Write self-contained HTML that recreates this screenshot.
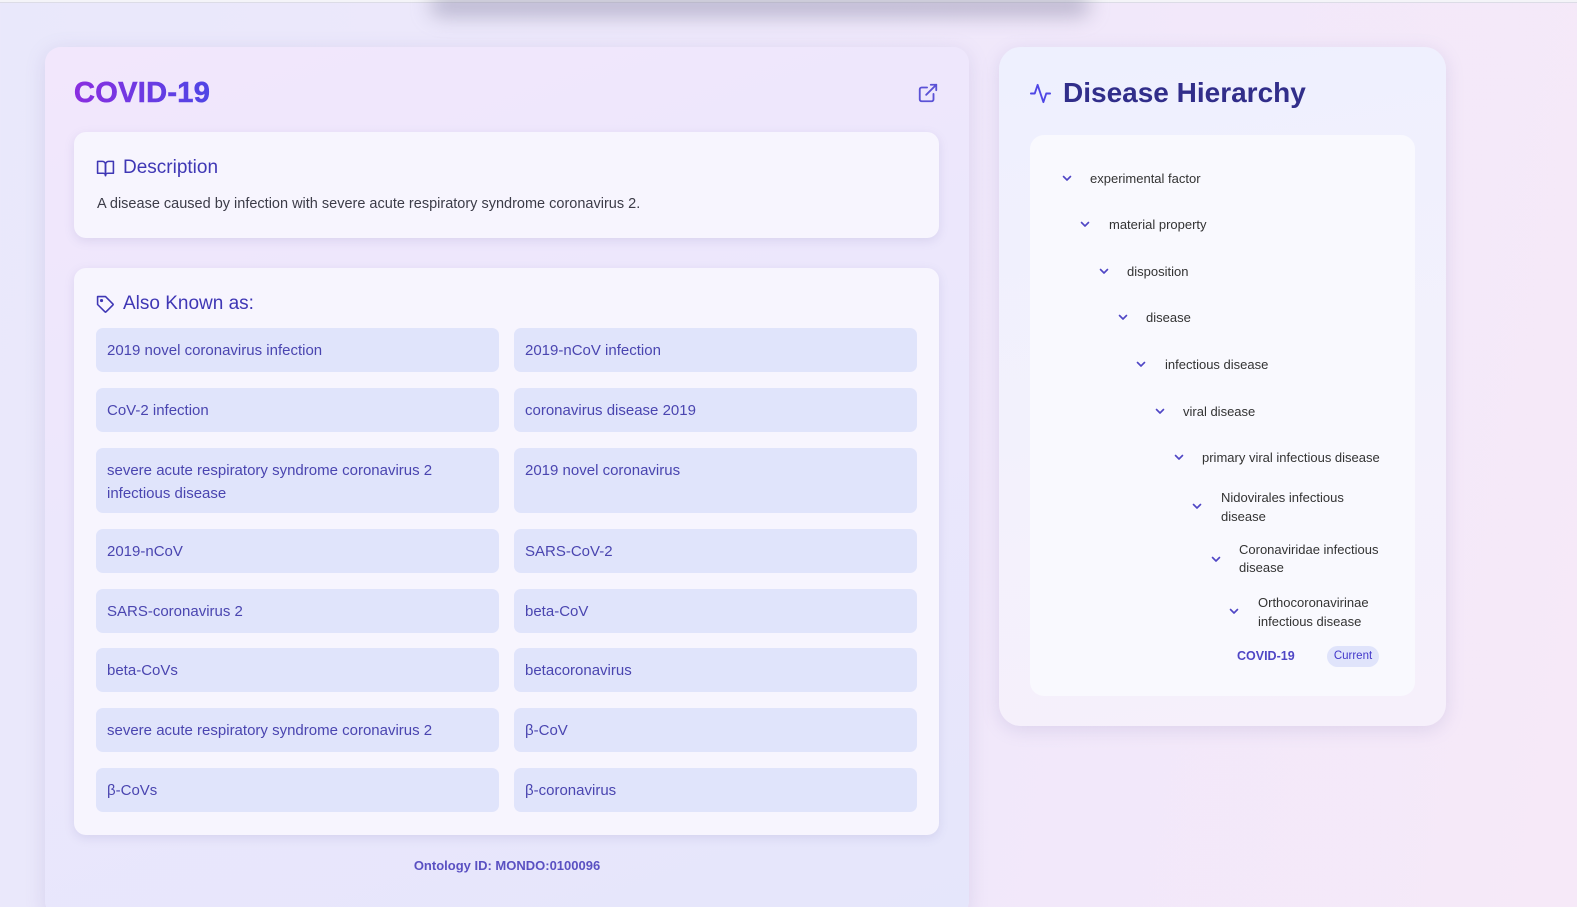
<!DOCTYPE html>
<html><head><meta charset="utf-8"><style>
*{box-sizing:border-box;margin:0;padding:0}
html,body{width:1577px;height:907px;overflow:hidden}
body{font-family:"Liberation Sans",sans-serif;background:linear-gradient(100deg,#e9e8fb 0%,#efe8fb 50%,#f6e9f8 100%);position:relative}
.topline{position:absolute;left:0;top:0;width:1577px;height:3px;background:#f4f4f8;border-bottom:1px solid #dcdce6}
.blob{position:absolute;left:430px;top:-6px;width:660px;height:22px;border-radius:20px;background:rgba(120,118,150,.45);filter:blur(10px)}
.card{position:absolute;left:45px;top:47px;width:924px;height:870px;border-radius:16px;background:linear-gradient(160deg,#f2e7fc 0%,#ebe7fc 50%,#e5e6fb 100%);box-shadow:0 4px 20px rgba(120,110,180,.18)}
.title{position:absolute;left:74px;top:77px;font-size:29px;font-weight:900;background:linear-gradient(90deg,#8a2ee0,#4f46e5);-webkit-background-clip:text;background-clip:text;color:transparent;letter-spacing:0.3px;-webkit-text-stroke:0.6px transparent}
.ext{position:absolute;left:917px;top:82px}
.sub{position:absolute;left:74px;width:865px;background:#f7f5fe;border-radius:12px;box-shadow:0 3px 10px rgba(110,100,170,.15)}
.h{position:absolute;left:22px;font-size:19px;color:#3f37b5;display:flex;align-items:center;gap:8px}
.desc{position:absolute;left:23px;top:64px;font-size:14.5px;color:#3c3c48}
.item{position:absolute;width:403px;background:#e0e4fb;border-radius:7px;color:#4a45b0;font-size:15px;line-height:23px;padding:11px 11px}
.oid{position:absolute;left:0;width:1014px;top:858px;text-align:center;font-size:13px;font-weight:bold;color:#5a50c2}
.rcard{position:absolute;left:999px;top:47px;width:447px;height:679px;border-radius:22px;background:linear-gradient(170deg,#eef0fe,#f3f1fc 60%,#f6f0fb);box-shadow:0 4px 18px rgba(120,110,180,.18)}
.rt{position:absolute;left:1063px;top:77px;font-size:28px;font-weight:bold;color:#312e8a}
.inner{position:absolute;left:1030px;top:135px;width:385px;height:561px;border-radius:14px;background:#f9f9fe}
.n{position:absolute;font-size:13px;color:#333;line-height:19px}
.c{position:absolute}
.cur{position:absolute;left:1327px;top:646px;width:52px;height:21px;border-radius:11px;background:#e0e4fb;color:#4338ca;font-size:11.5px;text-align:center;line-height:21px}
</style></head><body>
<div class="topline"></div>
<div class="blob"></div>
<div class="card"></div>
<div class="title">COVID-19</div>
<svg class="ext" width="22" height="22" viewBox="0 0 24 24" fill="none" stroke="#5b52d6" stroke-width="2" stroke-linecap="round" stroke-linejoin="round"><path d="M18 13v6a2 2 0 0 1-2 2H5a2 2 0 0 1-2-2V8a2 2 0 0 1 2-2h6"/><path d="M15 3h6v6"/><path d="M10 14 21 3"/></svg>
<div class="sub" style="top:132px;height:106px">
<div class="h" style="top:25px"><svg width="19" height="19" viewBox="0 0 24 24" fill="none" stroke="#3f37b5" stroke-width="2" stroke-linecap="round" stroke-linejoin="round"><path d="M2 3h6a4 4 0 0 1 4 4v14a3 3 0 0 0-3-3H2z"/><path d="M22 3h-6a4 4 0 0 0-4 4v14a3 3 0 0 1 3-3h7z"/></svg>Description</div>
<div class="desc">A disease caused by infection with severe acute respiratory syndrome coronavirus 2.</div>
</div>
<div class="sub" style="top:268px;height:567px">
<div class="h" style="top:25px"><svg width="19" height="19" viewBox="0 0 24 24" fill="none" stroke="#3f37b5" stroke-width="2" stroke-linecap="round" stroke-linejoin="round"><path d="M12 2H2v10l9.29 9.29a1 1 0 0 0 1.41 0l8.59-8.59a1 1 0 0 0 0-1.41z"/><circle cx="7" cy="7" r="1"/></svg>Also Known as:</div>
</div>
<div class="item" style="left:96px;top:328px;height:44px">2019 novel coronavirus infection</div>
<div class="item" style="left:514px;top:328px;height:44px">2019-nCoV infection</div>
<div class="item" style="left:96px;top:388px;height:44px">CoV-2 infection</div>
<div class="item" style="left:514px;top:388px;height:44px">coronavirus disease 2019</div>
<div class="item" style="left:96px;top:448px;height:65px">severe acute respiratory syndrome coronavirus 2 infectious disease</div>
<div class="item" style="left:514px;top:448px;height:65px">2019 novel coronavirus</div>
<div class="item" style="left:96px;top:529px;height:44px">2019-nCoV</div>
<div class="item" style="left:514px;top:529px;height:44px">SARS-CoV-2</div>
<div class="item" style="left:96px;top:589px;height:44px">SARS-coronavirus 2</div>
<div class="item" style="left:514px;top:589px;height:44px">beta-CoV</div>
<div class="item" style="left:96px;top:648px;height:44px">beta-CoVs</div>
<div class="item" style="left:514px;top:648px;height:44px">betacoronavirus</div>
<div class="item" style="left:96px;top:708px;height:44px">severe acute respiratory syndrome coronavirus 2</div>
<div class="item" style="left:514px;top:708px;height:44px">β-CoV</div>
<div class="item" style="left:96px;top:768px;height:44px">β-CoVs</div>
<div class="item" style="left:514px;top:768px;height:44px">β-coronavirus</div>
<div class="oid">Ontology ID: MONDO:0100096</div>

<div class="rcard"></div>
<svg style="position:absolute;left:1029px;top:82px" width="23" height="23" viewBox="0 0 24 24" fill="none" stroke="#4f46e5" stroke-width="2" stroke-linecap="round" stroke-linejoin="round"><path d="M22 12h-4l-3 9L9 3l-3 9H2"/></svg>
<div class="rt">Disease Hierarchy</div>
<div class="inner"></div>
<svg width="0" height="0" style="position:absolute"><defs><symbol id="ch" viewBox="0 0 12 12"><path d="M2.5 4.5 6 8l3.5-3.5" fill="none" stroke="#4f46c5" stroke-width="1.6" stroke-linecap="round" stroke-linejoin="round"/></symbol></defs></svg>
<svg class="c" style="left:1061px;top:172px" width="12" height="12"><use href="#ch"/></svg><div class="n" style="left:1090px;top:169px">experimental factor</div>
<svg class="c" style="left:1079px;top:218px" width="12" height="12"><use href="#ch"/></svg><div class="n" style="left:1109px;top:215px">material property</div>
<svg class="c" style="left:1098px;top:265px" width="12" height="12"><use href="#ch"/></svg><div class="n" style="left:1127px;top:262px">disposition</div>
<svg class="c" style="left:1117px;top:311px" width="12" height="12"><use href="#ch"/></svg><div class="n" style="left:1146px;top:308px">disease</div>
<svg class="c" style="left:1135px;top:358px" width="12" height="12"><use href="#ch"/></svg><div class="n" style="left:1165px;top:355px">infectious disease</div>
<svg class="c" style="left:1154px;top:405px" width="12" height="12"><use href="#ch"/></svg><div class="n" style="left:1183px;top:402px">viral disease</div>
<svg class="c" style="left:1173px;top:451px" width="12" height="12"><use href="#ch"/></svg><div class="n" style="left:1202px;top:448px">primary viral infectious disease</div>
<svg class="c" style="left:1191px;top:500px" width="12" height="12"><use href="#ch"/></svg><div class="n" style="left:1221px;top:488px;width:160px">Nidovirales infectious<br>disease</div>
<svg class="c" style="left:1210px;top:553px" width="12" height="12"><use href="#ch"/></svg><div class="n" style="left:1239px;top:541px;width:160px;line-height:18px">Coronaviridae infectious<br>disease</div>
<svg class="c" style="left:1228px;top:605px" width="12" height="12"><use href="#ch"/></svg><div class="n" style="left:1258px;top:593px;width:160px">Orthocoronavirinae<br>infectious disease</div>
<div class="n" style="left:1237px;top:647px;color:#4f46c5;font-weight:bold;font-size:12.5px">COVID-19</div>
<div class="cur">Current</div>
</body></html>
